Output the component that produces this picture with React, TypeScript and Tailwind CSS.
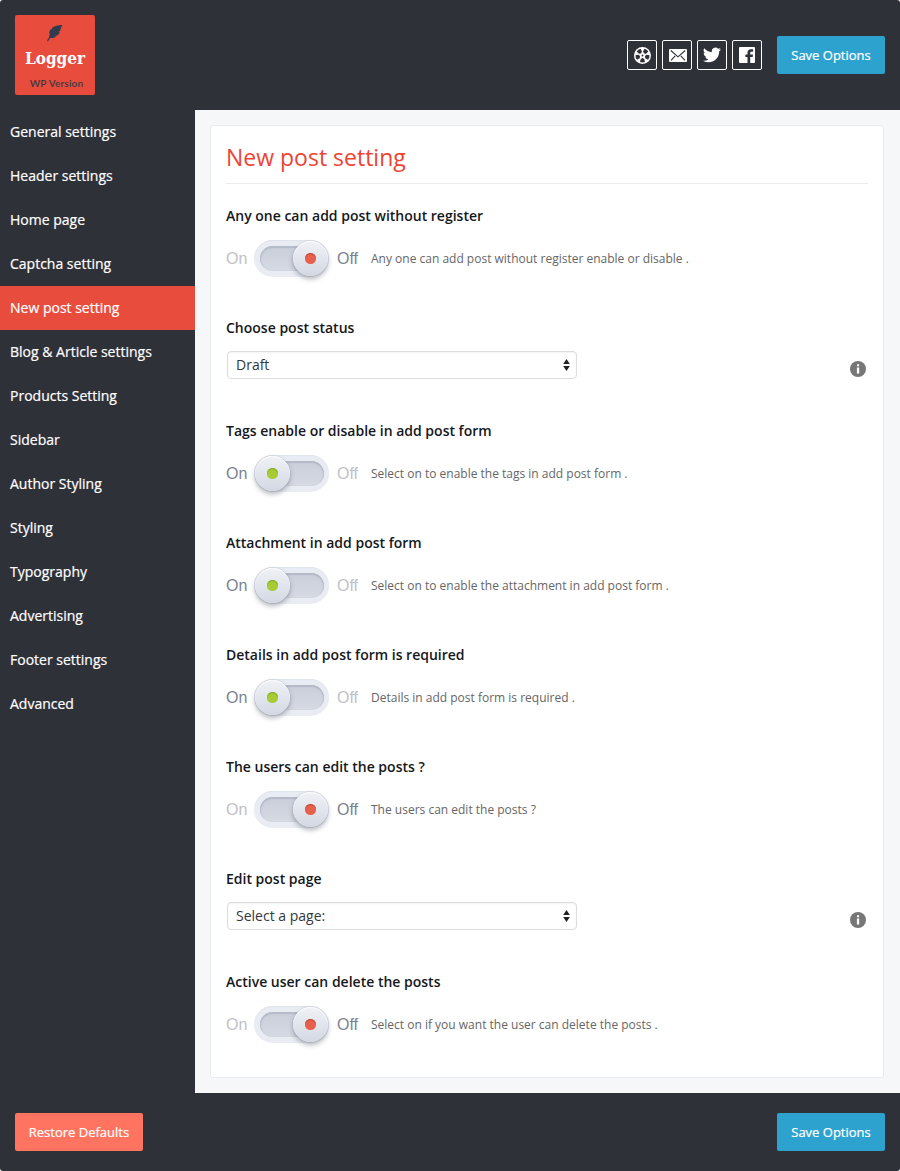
import { useState } from "react";

type Row =
  | { kind: "toggle"; label: string; on: boolean; text: string }
  | { kind: "select"; label: string; options: string[] };

const menu = [
  "General settings",
  "Header settings",
  "Home page",
  "Captcha setting",
  "New post setting",
  "Blog & Article settings",
  "Products Setting",
  "Sidebar",
  "Author Styling",
  "Styling",
  "Typography",
  "Advertising",
  "Footer settings",
  "Advanced",
];

const rows: Row[] = [
  { kind: "toggle", label: "Any one can add post without register", on: false, text: "Any one can add post without register enable or disable ." },
  { kind: "select", label: "Choose post status", options: ["Draft"] },
  { kind: "toggle", label: "Tags enable or disable in add post form", on: true, text: "Select on to enable the tags in add post form ." },
  { kind: "toggle", label: "Attachment in add post form", on: true, text: "Select on to enable the attachment in add post form ." },
  { kind: "toggle", label: "Details in add post form is required", on: true, text: "Details in add post form is required ." },
  { kind: "toggle", label: "The users can edit the posts ?", on: false, text: "The users can edit the posts ?" },
  { kind: "select", label: "Edit post page", options: ["Select a page:"] },
  { kind: "toggle", label: "Active user can delete the posts", on: false, text: "Select on if you want the user can delete the posts ." },
];

function Logo() {
  return (
    <div className="flex h-20 w-20 flex-col items-center rounded-[2px] bg-[#e84c3d] pt-[10px]">
      <svg width="16" height="17" viewBox="0 0 16 17" fill="#2f3b4e" className="shrink-0">
        <path d="M15.600 0C11 .2 7.200.9 5 3L4.700 4.600 3.800 4.300C2.500 5.800 2.100 7.300 2.300 8.800L3.100 9.200 2.200 10.400 2.300 11.700 0 15.700l.9.700 2.200-3.400c2.400.3 4.400-.2 5.900-1.500l-1.300-.6 2.900-.5c1.100-1 1.800-2.200 2-3.400l-1.400-.1 2-1.200C13.800 3.600 14.200 1.500 15.600 0Z" />
      </svg>
      <div className="mt-[3px] h-[26px] font-['DejaVu_Serif',serif] text-[17px] leading-[26px] font-bold text-white [font-stretch:condensed]">
        Logger
      </div>
      <div className="mt-[6px] ml-[3px] font-['Lato',sans-serif] text-[10px] leading-[12px] font-semibold tracking-[0.2px] text-[#3b3944]">
        WP Version
      </div>
    </div>
  );
}

const holeAngles = [36, 108, 180, 252, 324];

function SocialIcons() {
  const box = "flex h-[30px] w-[30px] items-center justify-center rounded-[2px] border border-white text-white";
  return (
    <div className="flex gap-[5px]">
      <a className={box} aria-label="Support">
        <svg width="17" height="17" viewBox="0 0 16 16" className="ml-px">
          <circle cx="8" cy="8" r="8" fill="#fff" />
          <g fill="#2f3139">
            {holeAngles.map((a) => (
              <path key={a} d="M5.700 1.800Q8 .900 10.300 1.800L9.700 4.700 8 5.600 6.300 4.700Z" transform={`rotate(${a} 8 8)`} />
            ))}
            <circle cx="8" cy="8" r="0.900" />
          </g>
        </svg>
      </a>
      <a className={box} aria-label="Mail">
        <svg width="18" height="13" viewBox="0 0 18 13" className="ml-px">
          <rect width="18" height="13" rx="1" fill="#fff" />
          <path d="M1.800 1.500 9 7.800l7.200-6.300M2 11.300l4.200-4.500M16 11.300l-4.200-4.500" fill="none" stroke="#2f3139" strokeWidth="1.100" />
        </svg>
      </a>
      <a className={box} aria-label="Twitter">
        <svg width="18" height="18" viewBox="0 0 24 24" fill="currentColor">
          <path d="M23.950 4.570a10 10 0 0 1-2.820.770 4.960 4.960 0 0 0 2.160-2.720c-.950.560-2 .960-3.130 1.180a4.920 4.920 0 0 0-8.380 4.480C7.690 8.100 4.070 6.130 1.640 3.160a4.920 4.920 0 0 0 1.520 6.570 4.900 4.900 0 0 1-2.230-.610v.060a4.920 4.920 0 0 0 3.950 4.830 5 5 0 0 1-2.210.080 4.940 4.940 0 0 0 4.600 3.420A9.870 9.870 0 0 1 0 19.540a14 14 0 0 0 7.550 2.210c9.050 0 14-7.500 14-13.980l-.020-.640a10 10 0 0 0 2.420-2.560Z" />
        </svg>
      </a>
      <a className={box} aria-label="Facebook">
        <svg width="16" height="16" viewBox="0 0 16 16">
          <rect width="16" height="16" rx="1" fill="#fff" />
          <path d="M8.500 16V10H6.400V7.500h2.100V5.800c0-2.200 1.300-3.500 3.400-3.500h2.200v2.400h-1.500c-1.100 0-1.400.400-1.400 1.300v1.500h2.800L13.700 10h-2.500v6Z" fill="#2f3139" />
        </svg>
      </a>
    </div>
  );
}

function SaveButton() {
  return (
    <button className="h-[38px] w-[108px] rounded-[2px] bg-[#2ea2cf] pt-px text-[13px] font-medium text-white [-webkit-text-stroke:0.2px]">
      Save Options
    </button>
  );
}

function Toggle({ initial }: { initial: boolean }) {
  const [on, setOn] = useState(initial);
  const active = "text-[#7b8290]";
  const idle = "text-[#bfc1c8]";
  return (
    <div className="flex h-[37px] items-center font-['Liberation_Sans',sans-serif] text-[16px]">
      <span className={`w-[28px] ${on ? active : idle}`}>On</span>
      <button
        aria-label="Toggle"
        onClick={() => setOn(!on)}
        className="relative h-[37px] w-[75px] rounded-full bg-[#e9edf3] p-[6px] shadow-[inset_0_1px_1px_#dfe3ea]"
      >
        <span className="block h-[25px] w-[64px] rounded-full bg-linear-to-b from-[#c9ced9] to-[#d6dae3] shadow-[inset_0_1px_1px_1px_#b4bac7]" />
        <span
          className={`absolute top-[0.500px] flex h-[35px] w-[35px] items-center justify-center rounded-full bg-linear-to-b from-[#f0f2f6] to-[#d3d8e3] shadow-[0_3px_5px_rgba(70,75,90,0.4),0_0_1px_rgba(70,75,90,0.45),inset_0_1px_1px_#fafbfd] ${on ? "left-[1px]" : "right-[1px]"}`}
        >
          <span
            className={`h-[11px] w-[11px] rounded-full ${on ? "bg-[#a8cb35] shadow-[inset_0_1px_1px_#80a022]" : "bg-[#e8604c] shadow-[inset_0_1px_1px_#b5483b]"}`}
          />
        </span>
      </button>
      <span className={`ml-[8px] w-[34px] ${on ? idle : active}`}>Off</span>
    </div>
  );
}

function Select({ options }: { options: string[] }) {
  return (
    <div className="flex">
      <label className="relative ml-px block h-[28px] w-[350px]">
        <select className="h-full w-full appearance-none rounded-[4px] border border-[#dcdcdc] bg-white px-2 text-[14px] leading-[26px] text-[#32373c] shadow-[inset_0_1px_2px_rgba(0,0,0,0.05)] outline-none">
          {options.map((o) => (
            <option key={o}>{o}</option>
          ))}
        </select>
        <svg width="7" height="12" viewBox="0 0 7 12" fill="#222" className="pointer-events-none absolute top-[8px] right-[7px]">
          <path d="M3.500 0 6.800 5H.2ZM.2 7h6.600L3.500 12Z" />
        </svg>
      </label>
      <svg width="16" height="16" viewBox="0 0 16 16" className="mt-[10px] mr-[2px] ml-auto">
        <circle cx="8" cy="8" r="8" fill="#777" />
        <path d="M7 3.200h2.100v2H7ZM6.900 6.600h2.300v6H6.900Z" fill="#fff" />
      </svg>
    </div>
  );
}

export default function App() {
  return (
    <div className="flex h-[1171px] w-[900px] flex-col rounded-[3px] bg-[#2f3139] font-['Open_Sans',sans-serif]">
      <header className="flex h-[110px] shrink-0 items-center justify-between px-[15px]">
        <Logo />
        <div className="flex items-center gap-[15px]">
          <SocialIcons />
          <SaveButton />
        </div>
      </header>

      <div className="flex h-[983px] shrink-0">
        <nav className="w-[195px] shrink-0">
          {menu.map((m) => (
            <a
              key={m}
              className={`block h-[44px] pl-[10px] text-[14px] leading-[44px] font-medium text-white [-webkit-text-stroke:0.2px] ${m === "New post setting" ? "bg-[#e84c3d]" : ""}`}
            >
              {m}
            </a>
          ))}
        </nav>
        <main className="flex-1 bg-[#f6f7f9] py-[15px] pr-4 pl-[15px]">
          <section className="h-[953px] rounded-[3px] border border-[#e7ebef] bg-white px-[15px]">
            <h1 className="h-[58px] border-b border-[#e9ebed] text-[23px] leading-[63px] text-[#ed4434]">
              New post setting
            </h1>
            <div className="pt-[20px]">
              {rows.map((r) => (
                <div key={r.label} className={r.kind === "toggle" ? "h-[112px]" : "h-[103px]"}>
                  <h2 className="h-[22px] text-[14px] leading-[24px] font-semibold text-[#15181c]">{r.label}</h2>
                  {r.kind === "toggle" ? (
                    <div className="mt-[14px] flex items-center">
                      <Toggle initial={r.on} />
                      <p className="text-[12px] text-[#666]">{r.text}</p>
                    </div>
                  ) : (
                    <div className="mt-[13px]">
                      <Select options={r.options} />
                    </div>
                  )}
                </div>
              ))}
            </div>
          </section>
        </main>
      </div>

      <footer className="flex flex-1 items-center justify-between px-[15px]">
        <button className="h-[38px] w-[128px] rounded-[2px] bg-[#ff7361] pt-px text-[13px] font-medium text-white [-webkit-text-stroke:0.2px]">
          Restore Defaults
        </button>
        <SaveButton />
      </footer>
    </div>
  );
}
